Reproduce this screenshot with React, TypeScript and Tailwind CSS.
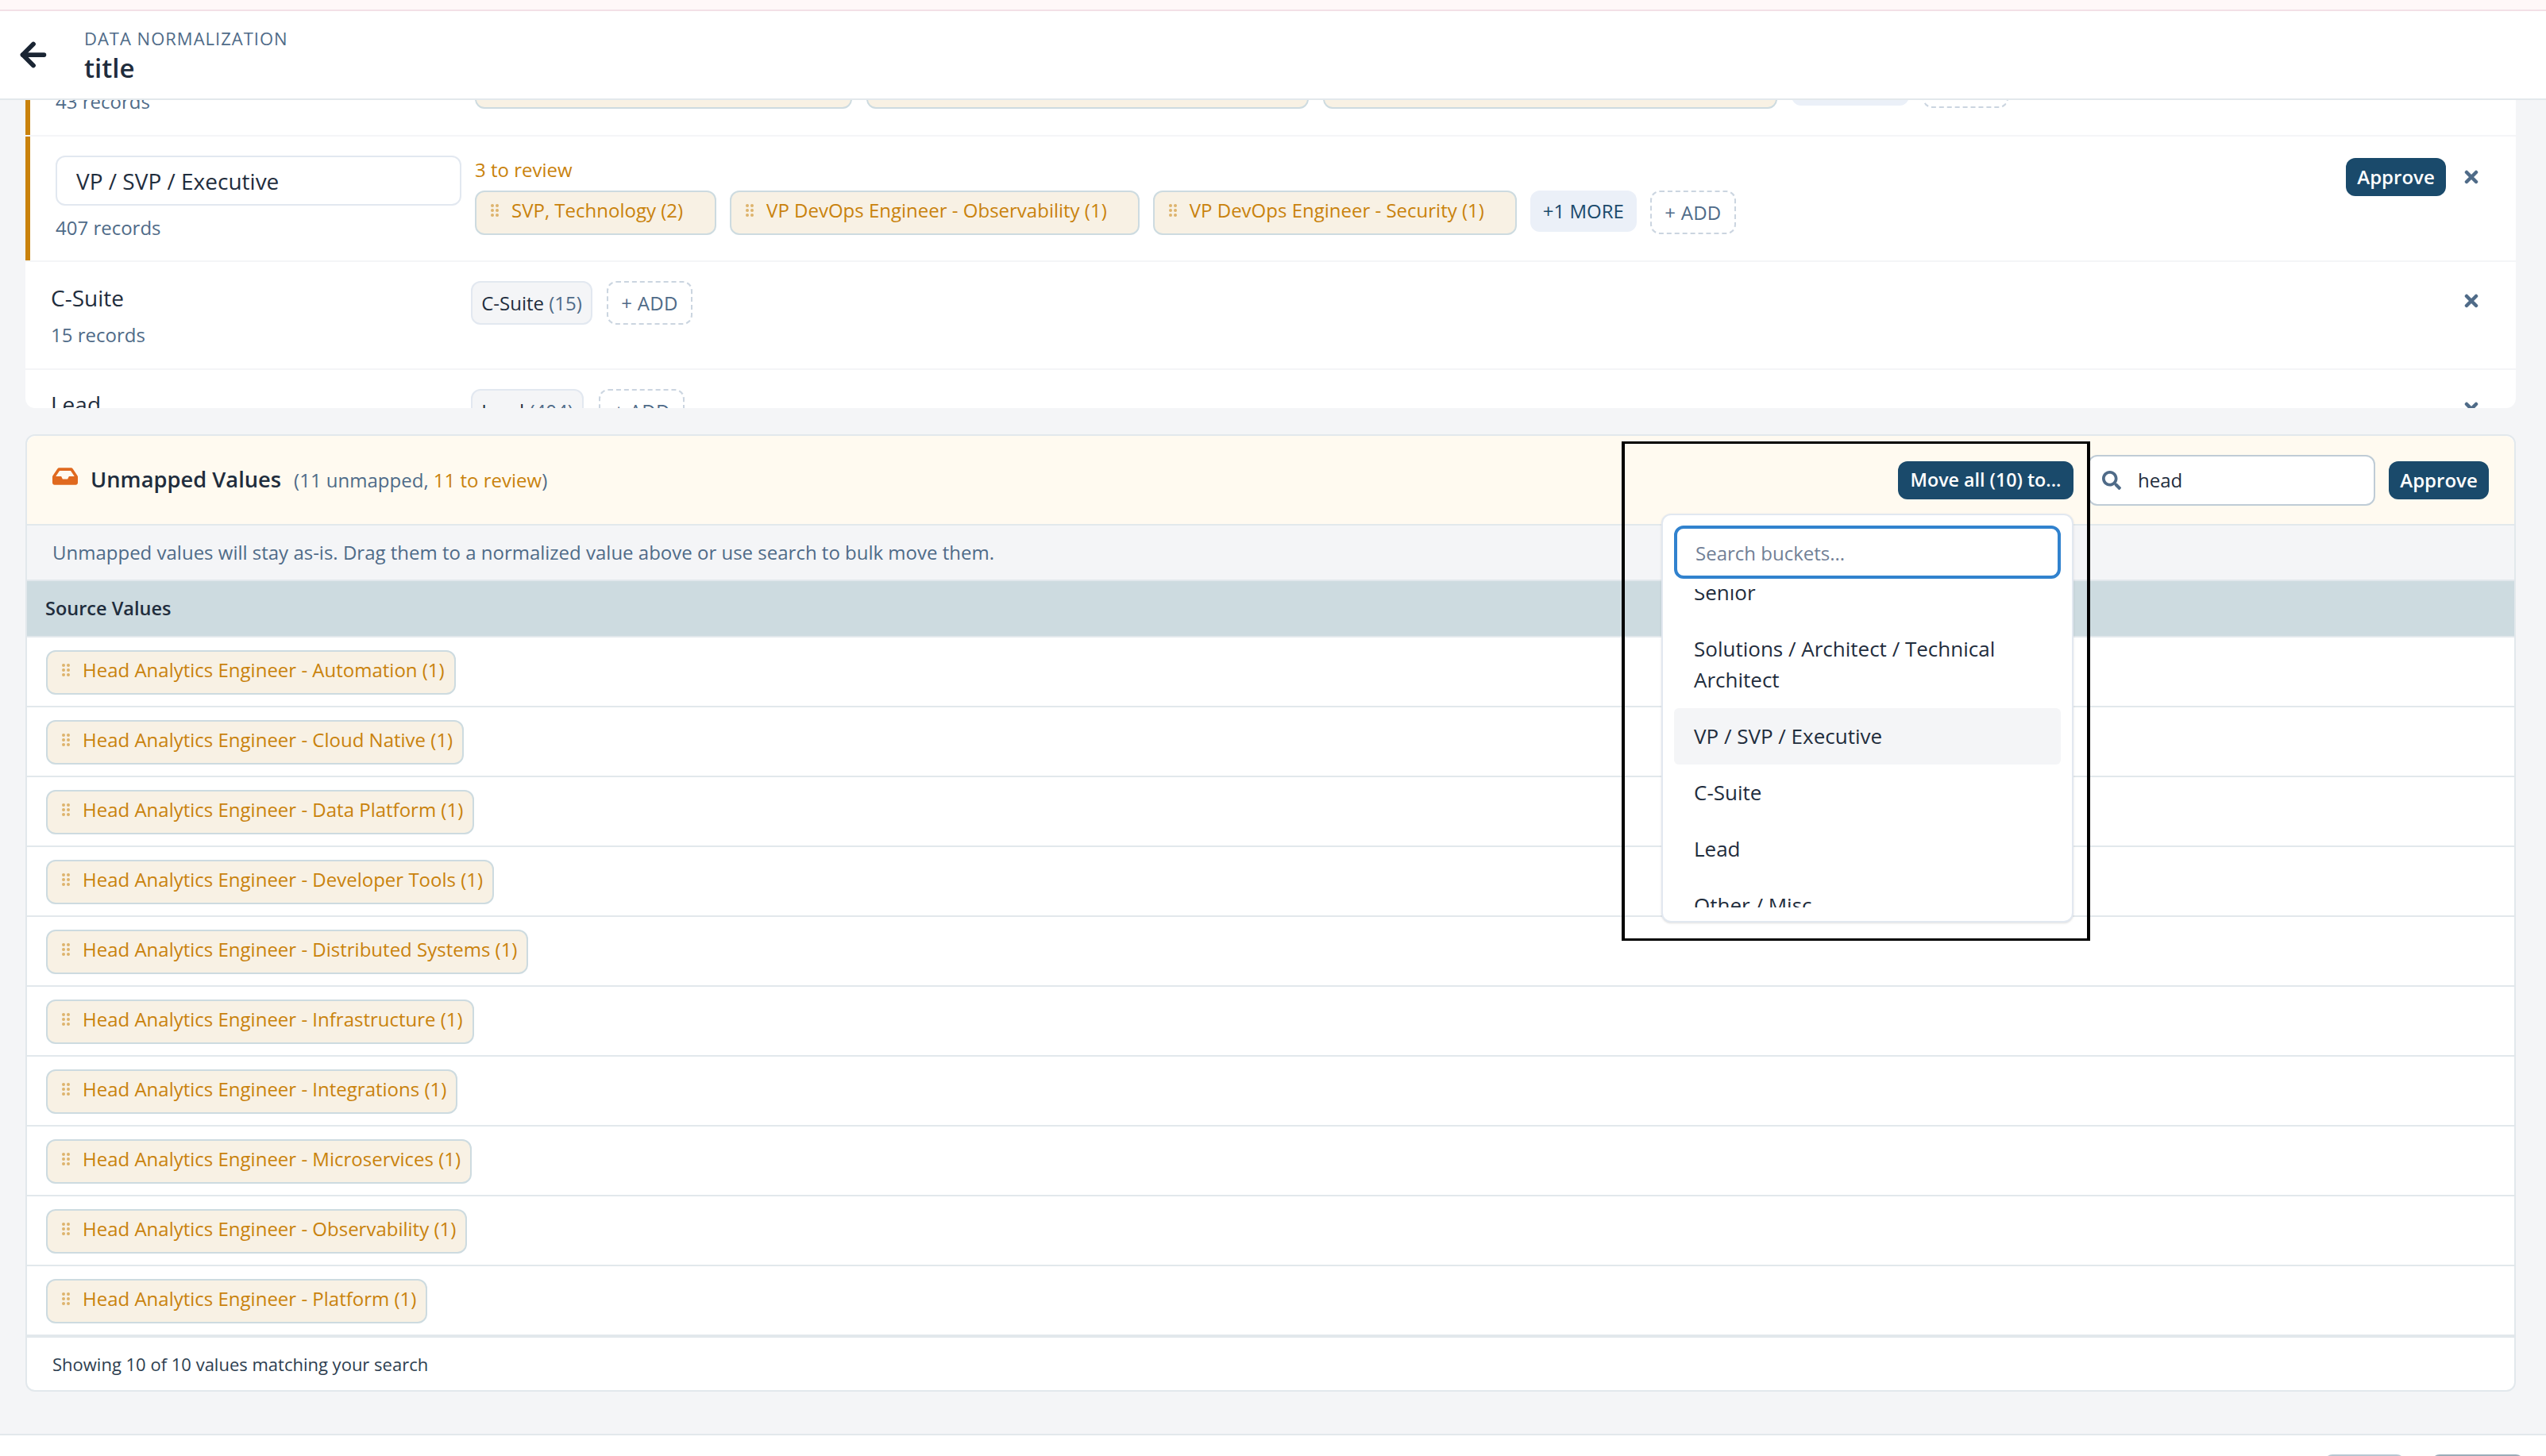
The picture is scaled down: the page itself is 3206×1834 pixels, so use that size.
import { ArrowLeft } from 'lucide-react'
import { FaInbox, FaSearch } from 'react-icons/fa'

const unmapped = [
  'Head Analytics Engineer - Automation (1)',
  'Head Analytics Engineer - Cloud Native (1)',
  'Head Analytics Engineer - Data Platform (1)',
  'Head Analytics Engineer - Developer Tools (1)',
  'Head Analytics Engineer - Distributed Systems (1)',
  'Head Analytics Engineer - Infrastructure (1)',
  'Head Analytics Engineer - Integrations (1)',
  'Head Analytics Engineer - Microservices (1)',
  'Head Analytics Engineer - Observability (1)',
  'Head Analytics Engineer - Platform (1)',
]

const Grip = () => (
  <svg width="10" height="16" viewBox="0 0 10 16" className="shrink-0 opacity-55" fill="#c9820c" aria-hidden="true">
    <circle cx="2" cy="2" r="2" />
    <circle cx="8" cy="2" r="2" />
    <circle cx="2" cy="8" r="2" />
    <circle cx="8" cy="8" r="2" />
    <circle cx="2" cy="14" r="2" />
    <circle cx="8" cy="14" r="2" />
  </svg>
)

const ReviewChip = ({ label, className = 'pr-[12px]' }: { label: string; className?: string }) => (
  <span className={`inline-flex h-[56px] items-center gap-[16px] whitespace-nowrap rounded-[12px] border-2 border-[#cddbe0] bg-[#f8f1e4] pb-[6px] pl-[18px] text-[24px] text-[#c9820c] ${className}`}>
    <Grip />
    {label}
  </span>
)

const AddChip = ({ className = '' }: { className?: string }) => (
  <span className={`inline-flex h-[55px] w-[108px] items-center justify-center rounded-[12px] border-2 border-dashed border-[#cbd5e0] text-[24px] tracking-[0.3px] text-[#4f6b88] ${className}`}>+ ADD</span>
)

const ApproveButton = ({ className = '' }: { className?: string }) => (
  <button type="button" className={`flex h-[48px] w-[126px] items-center justify-center rounded-[12px] bg-[#1a4a6b] text-[24px] font-semibold text-white ${className}`}>Approve</button>
)

const CloseIcon = ({ className = '' }: { className?: string }) => (
  <svg width="18" height="18" viewBox="0 0 18 18" className={`shrink-0 ${className}`} aria-hidden="true">
    <path d="M3 3l12 12M15 3L3 15" fill="none" stroke="#4f6b88" strokeWidth="4.500" strokeLinecap="round" />
  </svg>
)

const ChevronIcon = ({ className = '' }: { className?: string }) => (
  <svg width="18" height="18" viewBox="0 0 18 18" className={`shrink-0 ${className}`} aria-hidden="true">
    <path d="M3 5l6 6 6-6" fill="none" stroke="#4f6b88" strokeWidth="4.500" strokeLinecap="round" />
  </svg>
)

export default function App() {
  return (
    <div className="flex h-[1834px] w-[3206px] flex-col overflow-hidden bg-[#f4f5f7] font-['Open_Sans',sans-serif] text-[#1f2d3d]">
      <div className="h-[14px] shrink-0 border-b-2 border-[#f3e0e6] bg-[#fff8f8]" />

      <header className="flex h-[112px] shrink-0 items-center border-b-2 border-[#e2e8ec] bg-white">
        <ArrowLeft size={46} strokeWidth={3} className="ml-[19px] text-[#1a2533]" />
        <div className="ml-[41px] mt-[4px]">
          <div className="text-[22px] uppercase leading-[30px] tracking-[1px] text-[#4f6b88]">Data Normalization</div>
          <div className="text-[33px] font-semibold leading-[46px]">title</div>
        </div>
      </header>

      <main className="flex min-h-0 flex-1 flex-col pl-[32px] pr-[38px]">
        <section className="h-[388px] shrink-0 overflow-hidden rounded-b-[12px] bg-white">
          <div className="flex h-[46px] items-end border-b-2 border-[#f4f5f7]">
            <div className="relative h-[44px] w-full overflow-hidden border-l-[6px] border-[#c9820c]">
              <div className="absolute bottom-[26px] left-[32px] text-[24px] leading-[32px] text-[#4f6b88]">43 records</div>
              <div className="absolute bottom-[33px] left-[560px] flex gap-[18px]">
                <ReviewChip label=" " className="w-[475px]" />
                <ReviewChip label=" " className="w-[557px]" />
                <ReviewChip label=" " className="w-[572px]" />
                <span className="mb-[3px] h-[52px] w-[148px] rounded-[12px] bg-[#ebf0f8]" />
                <AddChip className="-ml-px" />
              </div>
            </div>
          </div>

          <div className="flex h-[158px] border-b-2 border-[#f4f5f7]">
            <div className="flex w-full border-l-[6px] border-[#c9820c]">
              <div className="ml-[32px] mt-[24px] w-[511px] shrink-0">
                <div className="flex h-[63px] items-center rounded-[12px] border-2 border-[#e2e8f0] pl-[24px] text-[28px]">VP / SVP / Executive</div>
                <div className="mt-[12px] text-[24px] leading-[32px] text-[#4f6b88]">407 records</div>
              </div>
              <div className="ml-[17px] mt-[26px]">
                <div className="text-[24px] leading-[32px] text-[#c9820c]">3 to review</div>
                <div className="mt-[10px] flex items-start gap-[17px]">
                  <ReviewChip label="SVP, Technology (2)" className="pr-[40px]" />
                  <ReviewChip label="VP DevOps Engineer - Observability (1)" className="pr-[39px]" />
                  <ReviewChip label="VP DevOps Engineer - Security (1)" className="pr-[39px]" />
                  <span className="flex h-[52px] w-[134px] items-center justify-center rounded-[12px] bg-[#ebf0f8] text-[24px] text-[#1a4a6b]">+1 MORE</span>
                  <AddChip />
                </div>
              </div>
              <div className="ml-auto mr-[47px] mt-[27px] flex items-start">
                <ApproveButton />
                <CloseIcon className="ml-[23px] mt-[15px]" />
              </div>
            </div>
          </div>

          <div className="flex h-[136px] border-b-2 border-[#f4f5f7]">
            <div className="ml-[32px] mt-[26px] w-[529px] shrink-0">
              <div className="text-[28px] leading-[38px]">C-Suite</div>
              <div className="mt-[12px] text-[24px] leading-[32px] text-[#4f6b88]">15 records</div>
            </div>
            <div className="mt-[24px] flex items-start gap-[18px]">
              <span className="flex h-[55px] w-[153px] items-center justify-center rounded-[12px] border-2 border-[#e2e8f0] bg-[#f4f5f7] text-[24px]">C-Suite&nbsp;<span className="text-[#4f6b88]">(15)</span></span>
              <AddChip />
            </div>
            <CloseIcon className="ml-auto mr-[47px] mt-[40px]" />
          </div>

          <div className="flex">
            <div className="ml-[32px] mt-[24px] w-[529px] shrink-0 text-[28px] leading-[38px]">Lead</div>
            <div className="mt-[24px] flex items-start gap-[19px]">
              <span className="flex h-[55px] w-[142px] items-center justify-center rounded-[12px] border-2 border-[#e2e8f0] bg-[#f4f5f7] text-[24px]">Lead&nbsp;<span className="text-[#4f6b88]">(404)</span></span>
              <AddChip />
            </div>
            <ChevronIcon className="ml-auto mr-[47px] mt-[38px]" />
          </div>
        </section>

        <section className="relative mt-[33px] h-[1206px] shrink-0 rounded-[12px] border-2 border-[#e2e8ec] bg-white">
          <div className="flex h-[113px] items-center rounded-t-[12px] border-b-2 border-[#e2e8ec] bg-[#fffaf0] pl-[32px] pr-[32px]">
            <FaInbox size={32} color="#e0691f" className="mb-[9px] shrink-0" />
            <span className="ml-[16px] text-[27.300px] font-semibold">Unmapped Values</span>
            <span className="ml-[16px] text-[24px] text-[#4f6b88]">(11 unmapped, <span className="text-[#c9820c]">11 to review</span>)</span>
            <button type="button" className="ml-auto flex h-[48px] w-[221px] items-center justify-center rounded-[12px] bg-[#1a4a6b] text-[23.250px] font-semibold text-white">Move all (10) to...</button>
            <div className="ml-[18px] flex h-[64px] w-[362px] items-center rounded-[12px] border-2 border-[#bfccd6] bg-white pl-[16px] text-[24px]">
              <FaSearch size={24} color="#4f6b88" className="shrink-0" />
              <span className="ml-[21px]">head</span>
            </div>
            <ApproveButton className="ml-[17px]" />
          </div>

          <div className="flex h-[68px] items-center bg-[#f4f5f7] pl-[32px] text-[24px] text-[#4f6b88]">Unmapped values will stay as-is. Drag them to a normalized value above or use search to bulk move them.</div>

          <div className="flex h-[73px] items-center border-y-2 border-[#e2e8ec] bg-[#cddbe0] pl-[23px] text-[23.500px] font-semibold">Source Values</div>

          {unmapped.map((value) => (
            <div key={value} className="flex h-[88px] items-center border-b-2 border-[#e2e8ec] pl-[24px] pt-[2px]">
              <ReviewChip label={value} />
            </div>
          ))}

          <div className="flex h-[66px] items-center border-t-2 border-[#e2e8ec] pl-[32px] pt-[2px] text-[22px] text-[#2d3e50]">Showing 10 of 10 values matching your search</div>

          <div className="absolute left-[2058px] top-[98px] z-10 h-[515px] w-[519px] overflow-hidden rounded-[12px] border-2 border-[#e2e8f0] bg-white shadow-sm">
            <div className="px-[14px] pt-[13px]">
              <div className="flex h-[67px] items-center rounded-[12px] border-[4px] border-[#3182ce] bg-white pl-[23px] pt-[2px] text-[24px] text-[#718096]">Search buckets...</div>
            </div>
            <div className="absolute inset-x-[14px] bottom-[17px] top-[93px] overflow-hidden">
              <div className="-mt-[31px] text-[26px] leading-[39px]">
                <div className="px-[25px] py-[16px]">Senior</div>
                <div className="px-[25px] py-[16px]">Solutions / Architect / Technical Architect</div>
                <div className="rounded-[6px] bg-[#f4f5f7] px-[25px] py-[16px]">VP / SVP / Executive</div>
                <div className="px-[25px] py-[16px]">C-Suite</div>
                <div className="px-[25px] py-[16px]">Lead</div>
                <div className="px-[25px] py-[16px]">Other / Misc</div>
              </div>
            </div>
          </div>

          <div className="pointer-events-none absolute left-[2008px] top-[7px] z-20 h-[629px] w-[590px] border-x-[4px] border-y-[3px] border-black" />
        </section>
      </main>

      <footer className="flex h-[28px] shrink-0 justify-end gap-[34px] border-t-2 border-[#e2e8ec] bg-white pr-[28px] pt-[24px]">
        <span className="h-[12px] w-[101px] rounded-t-[10px] bg-[#b8c7d2]" />
        <span className="h-[12px] w-[116px] rounded-t-[10px] bg-[#9aacb9]" />
      </footer>
    </div>
  )
}
